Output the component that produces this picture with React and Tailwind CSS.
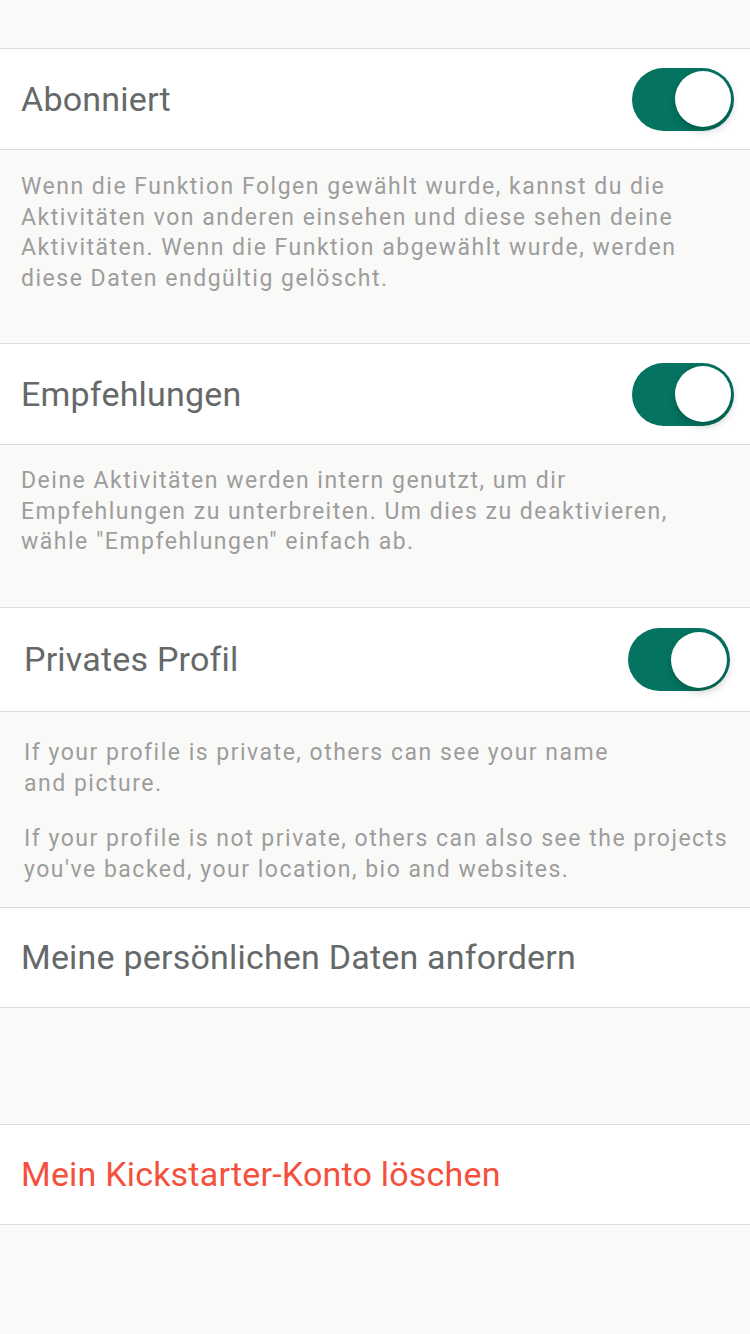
import { useState } from "react";

function Toggle({ on, onChange }) {
  return (
    <button
      type="button"
      onClick={onChange}
      className={`flex h-[63px] w-[102px] shrink-0 items-center rounded-full p-[3px] transition ${
        on ? "justify-end bg-[#04735f]" : "justify-start bg-[#e5e5e5]"
      }`}
    >
      <span className="block h-[56px] w-[56px] rounded-full bg-white shadow-[1px_4px_8px_rgba(0,0,0,0.22)]" />
    </button>
  );
}

function ToggleRow({ label, on, onChange, tall }) {
  return (
    <div
      className={`flex items-center justify-between border-y border-[#dcdcdc] bg-white ${
        tall ? "h-[105px] pl-6 pr-5" : "h-[102px] pl-[21px] pr-4"
      }`}
    >
      <span className="text-[34px] tracking-[0.2px] text-[#656969]">{label}</span>
      <Toggle on={on} onChange={onChange} />
    </div>
  );
}

export default function App() {
  const [state, setState] = useState({ follow: true, recs: true, priv: true });
  const flip = (k) => () => setState((s) => ({ ...s, [k]: !s[k] }));

  const note = "text-[23px] leading-[30.7px] tracking-[1.5px] text-[#9d9d9d]";

  return (
    <div className="min-h-[1334px] bg-[#f9f9f8] pt-12 font-['Roboto',sans-serif]">
      <ToggleRow label="Abonniert" on={state.follow} onChange={flip("follow")} />
      <div className={`h-[193px] pl-[21px] pr-[40px] pt-[22px] ${note}`}>
        Wenn die Funktion Folgen gewählt wurde, kannst du die Aktivitäten von anderen einsehen und diese sehen deine
        Aktivitäten. Wenn die Funktion abgewählt wurde, werden diese Daten endgültig gelöscht.
      </div>

      <ToggleRow label="Empfehlungen" on={state.recs} onChange={flip("recs")} />
      <div className={`h-[162px] pl-[21px] pr-[40px] pt-[21px] ${note}`}>
        Deine Aktivitäten werden intern genutzt, um dir Empfehlungen zu unterbreiten. Um dies zu deaktivieren, wähle
        "Empfehlungen" einfach ab.
      </div>

      <ToggleRow label="Privates Profil" on={state.priv} onChange={flip("priv")} tall />
      <div className={`h-[195px] pl-6 pr-2 pt-[26px] ${note}`}>
        <p>
          If your profile is private, others can see your name
          <br />
          and picture.
        </p>
        <p className="mt-[25px]">
          If your profile is not private, others can also see the projects you've backed, your location, bio and
          websites.
        </p>
      </div>

      <div className="flex h-[101px] items-center border-y border-[#dcdcdc] bg-white pl-[21px] text-[34px] tracking-[0.2px] text-[#656969]">
        Meine persönlichen Daten anfordern
      </div>
      <div className="h-[116px]" />
      <div className="flex h-[101px] items-center border-y border-[#dcdcdc] bg-white pl-[21px] text-[34px] tracking-[0.2px] text-[#f4503c]">
        Mein Kickstarter-Konto löschen
      </div>
    </div>
  );
}
